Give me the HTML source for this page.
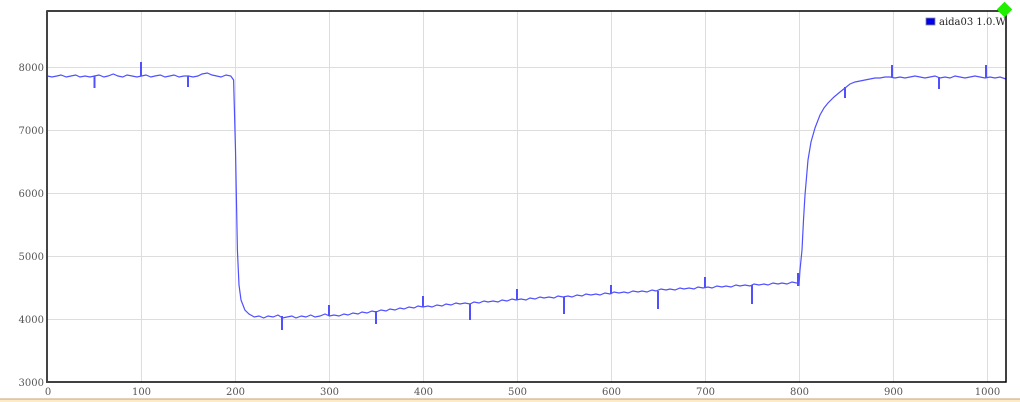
<!DOCTYPE html>
<html><head><style>
html,body{margin:0;padding:0;background:#fff;width:1020px;height:402px;overflow:hidden}
svg{display:block}
text{font-family:"DejaVu Serif","Liberation Serif",serif;font-size:10px;fill:#555}
</style></head><body>
<svg width="1020" height="402" viewBox="0 0 1020 402">
<rect x="0" y="399" width="1020" height="3" fill="#fdebc8"/>
<line x1="0" y1="399" x2="1020" y2="399" stroke="#c8a070" stroke-width="1"/>
<g stroke="#ddd" stroke-width="1">
<line x1="141.5" y1="11" x2="141.5" y2="382"/><line x1="235.5" y1="11" x2="235.5" y2="382"/>
<line x1="329.5" y1="11" x2="329.5" y2="382"/><line x1="423.5" y1="11" x2="423.5" y2="382"/>
<line x1="517.5" y1="11" x2="517.5" y2="382"/><line x1="611.5" y1="11" x2="611.5" y2="382"/>
<line x1="705.5" y1="11" x2="705.5" y2="382"/><line x1="799.5" y1="11" x2="799.5" y2="382"/>
<line x1="893.5" y1="11" x2="893.5" y2="382"/><line x1="987.5" y1="11" x2="987.5" y2="382"/>
<line x1="47" y1="67.5" x2="1006" y2="67.5"/><line x1="47" y1="130.5" x2="1006" y2="130.5"/>
<line x1="47" y1="193.5" x2="1006" y2="193.5"/><line x1="47" y1="256.5" x2="1006" y2="256.5"/>
<line x1="47" y1="319.5" x2="1006" y2="319.5"/>
</g>
<polyline fill="none" stroke="#5050ff" stroke-width="1.2" points="
47.5,76 52,77 56.9,76 61,75 66.3,77 71,76 75.7,75 80,77 85.1,76 90,77 94.5,76 99,75 103.9,77 108,76 113.3,74 118,76 122.7,77 127,75 132.1,76 137,77 141.5,76 146,75 150.9,77 155,76 160.3,75 165,77 169.7,76 174,75 179.1,77 184,76 188.5,76 193,77 197.9,76 202,74 207.3,73 212,75 216.7,76 221,77 226.1,75 230.8,76 233.6,80 235.5,150 237.4,250 239,285 241,300 244.9,310 249,314 254.3,317 259,316 263.7,318 268,316 273.1,317 278,315 282.5,318 287,317 291.9,316 296,318 301.3,316 306,317 310.7,315 315,317 320.1,316 325,314 329.5,316 334,315 339,316 344,314 348,315 353,313 358,314 362,312 367,313 372,311 376,312 381,310 386,311 390,309 395,310 400,308 404,309 409,307 414,308 418,306 423,307 428,306 432,307 437,305 442,306 446,304 451,305 456,303 460,304 465,303 470,304 474,302 479,303 484,301 488,302 493,301 498,302 502,300 507,301 512,299 516,300 521,299 526,300 530,298 535,299 540,297 544,298 549,297 554,298 558,296 563,297 568,296 572,297 577,295 582,296 586,294 591,295 596,294 600,295 605,293 610,294 614,292 619,293 624,292 628,293 633,291 638,292 642,291 647,292 652,290 656,291 661,289 666,290 670,289 675,290 680,288 684,289 689,288 694,289 698,287 703,288 708,287 712,288 717,286 722,287 726,286 731,287 736,285 740,286 745,285 750,286 754,284 759,285 764,284 768,285 773,283 778,284 782,283 787,284 792,282 797,283 799,285 800,270 802,250 803.5,220 805,195 808,160 811,142 815,128 820,115 824,108 828,103 834,97 840,92 845,88 850,84 855,82 860,81 865,80 870,79 875,78 880,78 885,77 890,77 895,78 900,77 905,78 910,77 915,76 920,77 925,78 930,77 935,76 940,78 945,77 950,78 955,76 960,77 965,78 970,77 975,76 980,77 985,78 990,77 995,78 1000,77 1006,79"/>
<g stroke="#5050ff" stroke-width="2">
<line x1="94.5" y1="76" x2="94.5" y2="88"/><line x1="141" y1="76" x2="141" y2="62"/>
<line x1="188" y1="76" x2="188" y2="87"/><line x1="282" y1="316" x2="282" y2="330"/>
<line x1="329" y1="316" x2="329" y2="305"/><line x1="376" y1="311" x2="376" y2="324"/>
<line x1="423" y1="307" x2="423" y2="296"/><line x1="470" y1="304" x2="470" y2="320"/>
<line x1="517" y1="300" x2="517" y2="289"/><line x1="564" y1="297" x2="564" y2="314"/>
<line x1="611" y1="294" x2="611" y2="285"/><line x1="658" y1="291" x2="658" y2="309"/>
<line x1="705" y1="288" x2="705" y2="277"/><line x1="752" y1="285" x2="752" y2="304"/>
<line x1="798" y1="286" x2="798" y2="273"/><line x1="845" y1="87" x2="845" y2="98"/>
<line x1="892" y1="77" x2="892" y2="65"/><line x1="939" y1="77" x2="939" y2="89"/>
<line x1="986" y1="78" x2="986" y2="65"/>
</g>
<path d="M47 11 H1006 V382 H47 Z" fill="none" stroke="#000" stroke-width="1.5"/>
<line x1="47" y1="11" x2="47" y2="383" stroke="#444" stroke-width="2"/>
<g text-anchor="end">
<text x="44" y="71">8000</text><text x="44" y="134">7000</text><text x="44" y="197">6000</text>
<text x="44" y="260">5000</text><text x="44" y="323">4000</text><text x="44" y="386">3000</text>
</g>
<g text-anchor="middle">
<text x="48" y="395">0</text><text x="141.5" y="395">100</text><text x="235.5" y="395">200</text>
<text x="329.5" y="395">300</text><text x="423.5" y="395">400</text><text x="517.5" y="395">500</text>
<text x="611.5" y="395">600</text><text x="705.5" y="395">700</text><text x="799.5" y="395">800</text>
<text x="893.5" y="395">900</text><text x="987.5" y="395">1000</text>
</g>
<rect x="926" y="18" width="9" height="7" fill="#0000ee" stroke="#888" stroke-width="0.8"/>
<text x="939" y="25" style="fill:#222">aida03 1.0.W</text>
<rect x="999" y="4" width="11" height="11" fill="#22ee00" transform="rotate(45 1004.5 9.5)"/>
</svg>
</body></html>
